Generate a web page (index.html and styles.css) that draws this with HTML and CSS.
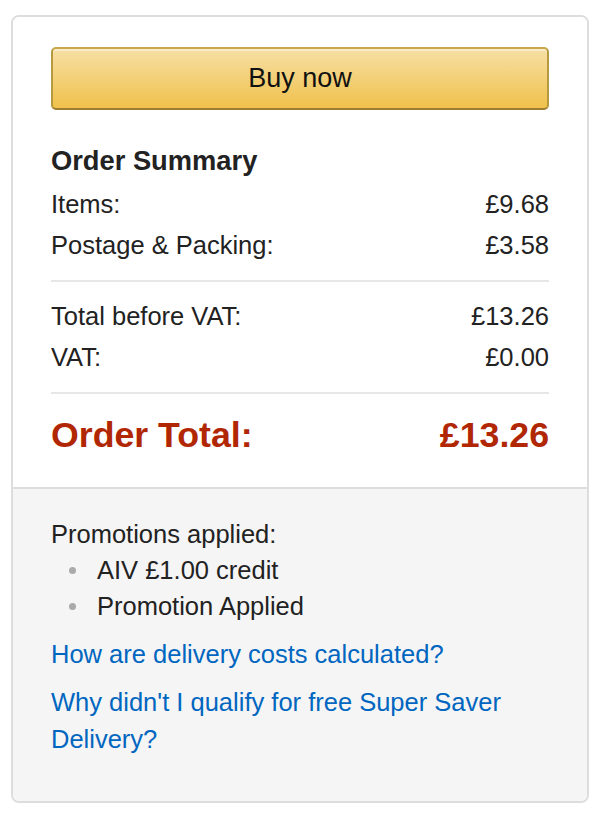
FILE: index.html
```html
<!DOCTYPE html>
<html>

<head>
    <meta charset="UTF-8">

    <link rel="stylesheet" href="styles.css">
</head>

<body>

    <div class="order-box">
        <div class="order-main">
            <button class="buy-button">Buy now</button>

            <div class="summary-title">Order Summary</div>

            <div class="summary-row">
                <span>Items:</span>
                <span>£9.68</span>
            </div>
            <div class="summary-row">
                <span>Postage &amp; Packing:</span>
                <span>£3.58</span>
            </div>

            <div class="summary-line"></div>

            <div class="summary-row">
                <span>Total before VAT:</span>
                <span>£13.26</span>
            </div>
            <div class="summary-row">
                <span>VAT:</span>
                <span>£0.00</span>
            </div>

            <div class="summary-line"></div>

            <div class="summary-row order-total">
                <span>Order Total:</span>
                <span>£13.26</span>
            </div>
        </div>

        <div class="order-extra">
            <div class="promo-title">Promotions applied:</div>
            <ul class="promo-list">
                <li>AIV £1.00 credit</li>
                <li>Promotion Applied</li>
            </ul>

            <a class="help-link" href="#">How are delivery costs calculated?</a>
            <a class="help-link" href="#">Why didn't I qualify for free Super Saver Delivery?</a>
        </div>
    </div>

</body>

</html>
```

FILE: styles.css
```css
body {
    margin: 0;
    padding: 15px 11px;
    background-color: #ffffff;
    font-family: "Liberation Sans", Arial, sans-serif;
    font-size: 25.5px;
    line-height: 36px;
    color: #222222;
}

.order-box {
    width: 578px;
    box-sizing: border-box;
    border: 2px solid #dddddd;
    border-radius: 8px;
    overflow: hidden;
}

.order-main {
    padding: 30px 38px 32px;
    background-color: #ffffff;
}

.buy-button {
    display: block;
    width: 100%;
    height: 63px;
    border: 2px solid #a88734;
    border-color: #c9a74d #b59a3f #9c7e31;
    border-radius: 5px;
    background: linear-gradient(to bottom, #f7dfa5, #f0c14b);
    box-shadow: inset 0 2px 0 rgb(255 255 255 / 40%);
    font-family: "Liberation Sans", Arial, sans-serif;
    font-size: 27px;
    color: #111111;
    padding: 0;
}

.summary-title {
    margin-top: 33px;
    font-size: 27.3px;
    font-weight: bold;
}

.summary-row {
    display: flex;
    justify-content: space-between;
    margin-top: 5px;
}

.summary-title + .summary-row {
    margin-top: 7px;
}

.summary-line {
    height: 2px;
    background-color: #e7e7e7;
    margin: 17px 0 16px;
}

.summary-line + .summary-row {
    margin-top: 0;
}

.order-total {
    margin-top: 0;
    padding-top: 5px;
    font-size: 35.7px;
    line-height: 40px;
    font-weight: bold;
    color: #b12704;
}

.order-extra {
    border-top: 2px solid #dddddd;
    background-color: #f5f5f5;
    padding: 27px 38px 43px;
}

.promo-list {
    margin: 0;
    padding-left: 46px;
    list-style: none;
}

.promo-list li {
    position: relative;
}

.promo-list li::before {
    content: "";
    position: absolute;
    left: -28px;
    top: 15px;
    width: 7px;
    height: 7px;
    border-radius: 50%;
    background-color: #aaaaaa;
}

.help-link {
    display: block;
    margin-top: 12px;
    color: #0066c0;
    text-decoration: none;
}

.help-link + .help-link {
    line-height: 37px;
}
```
